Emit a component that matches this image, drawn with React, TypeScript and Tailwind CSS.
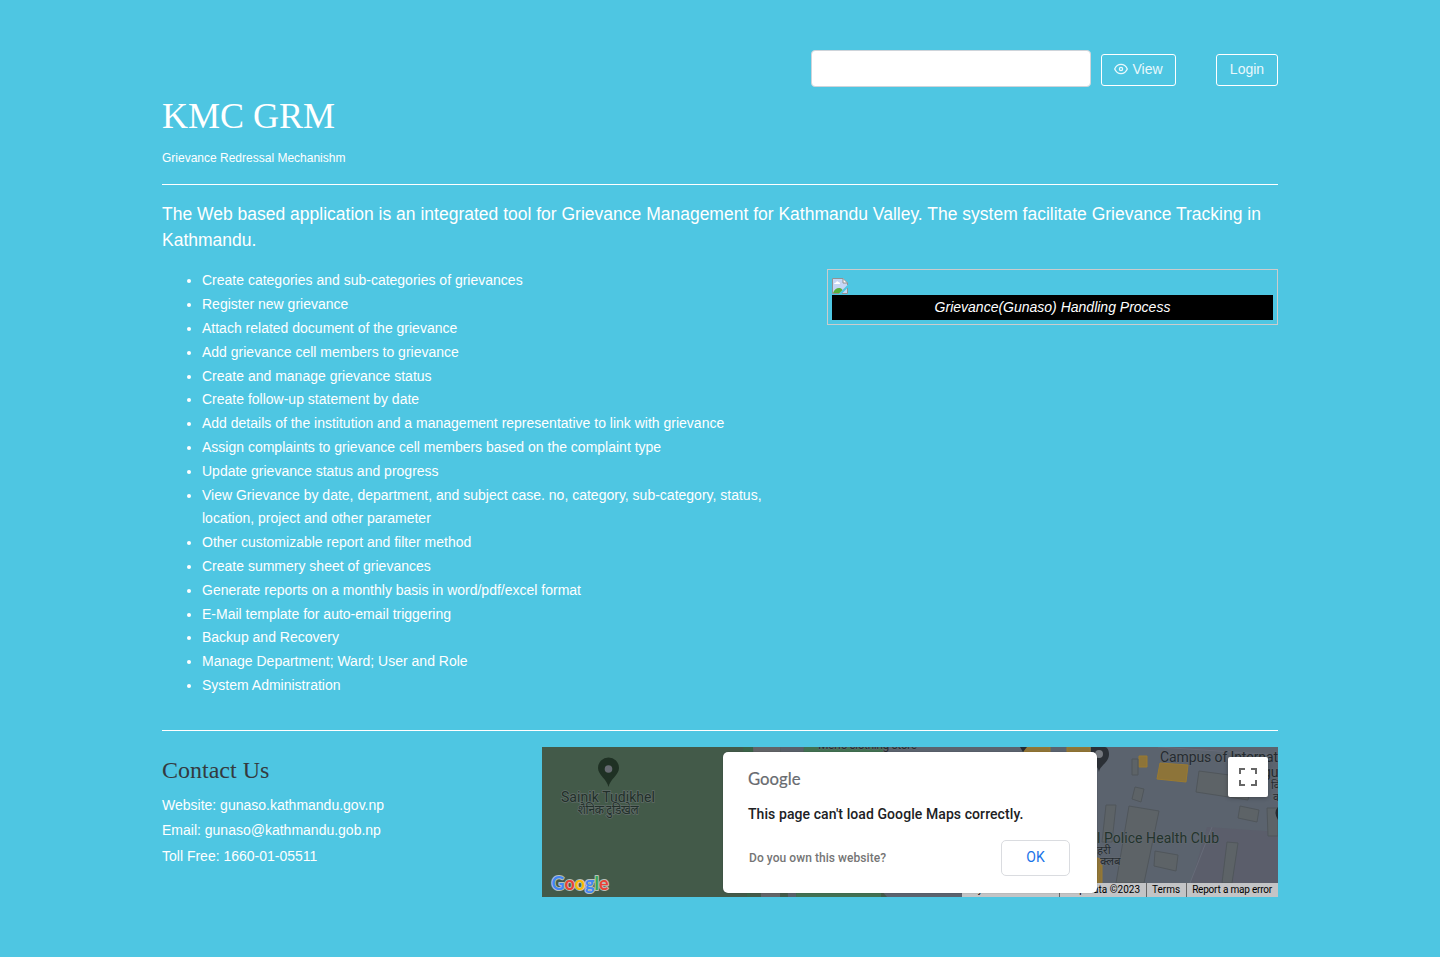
import React from "react";

const features = [
  "Create categories and sub-categories of grievances",
  "Register new grievance",
  "Attach related document of the grievance",
  "Add grievance cell members to grievance",
  "Create and manage grievance status",
  "Create follow-up statement by date",
  "Add details of the institution and a management representative to link with grievance",
  "Assign complaints to grievance cell members based on the complaint type",
  "Update grievance status and progress",
  "View Grievance by date, department, and subject case. no, category, sub-category, status, location, project and other parameter",
  "Other customizable report and filter method",
  "Create summery sheet of grievances",
  "Generate reports on a monthly basis in word/pdf/excel format",
  "E-Mail template for auto-email triggering",
  "Backup and Recovery",
  "Manage Department; Ward; User and Role",
  "System Administration",
];

function EyeIcon() {
  return (
    <svg className="mb-[2px]" width="14" height="14" viewBox="0 0 14 14" fill="none" stroke="currentColor" strokeWidth="1.3">
      <path d="M.7 7C2 4 4.300 2.400 7 2.400S12 4 13.300 7C12 10 9.700 11.600 7 11.600S2 10 .7 7Z" />
      <circle cx="7" cy="7" r="1.600" />
    </svg>
  );
}

function MissingImageIcon() {
  return (
    <svg className="block" width="16" height="16" viewBox="0 0 16 16">
      <path d="M.5.500H11L15.500 5V7L7 15.500H.5Z" fill="#c6d6f5" />
      <path d="M2 6Q2.300 4.500 4 4.500Q5 2.500 6.500 4Q8.500 4.500 8 6Z" fill="#fff" />
      <path d="M1 15Q3 10 7 10Q9 9.500 10.500 12L7 15.500H1Z" fill="#58b03a" />
      <path d="M15.500 10V15.500H10Z" fill="#c6d6f5" />
      <path d="M11 .5V5H15.500Z" fill="#fff" />
      <path d="M7 15.500H.5V.5H11L15.500 5V7M11 .5V5H15.500M15.500 10V15.500H10" fill="none" stroke="#929292" />
    </svg>
  );
}

function MapCanvas() {
  return (
    <svg className="block" width="736" height="150" viewBox="0 0 736 150" fontFamily="Roboto, 'Noto Sans', sans-serif">
      <rect width="736" height="150" fill="#5b636e" />
      <path d="M0 0H400V150H0Z" fill="#435a49" />
      <path d="M201 0H211L208 150H205Z" fill="#3b6348" />
      <path d="M211 0H238V150H219Z" fill="#626467" />
      <path d="M238 0H262L254 150H246Z" fill="#596069" />
      <path d="M262 0H345L339 150H254Z" fill="#427052" />
      <path d="M345 0H736V150H345L338 142V8Z" fill="#5b636e" />
      <path d="M665 80L736 85V150H645Z" fill="#5b5e6b" />
      <g fill="#8d7439" stroke="#9a7a31">
        <path d="M484 0H508V5H482ZM525 0H548V5H525ZM554 24V34H550M548 131V138H560V118H555" />
        <path d="M597 9H605V20H597ZM618 16L646 18L644 35L615 32ZM548 109L559 112L556 133H548Z" />
      </g>
      <g fill="#5d6367" stroke="#50565b">
        <path d="M590 12H596V28H590ZM593 40L602 42L599 55L590 52ZM564 58H574L570 95H560ZM587 59L617 64L602 136H574ZM657 24L710 31L706 53L654 45ZM698 59L717 63L715 75L696 71ZM613 104L636 108L634 124L612 119ZM685 95L696 96L690 136H680ZM725 61H736V89H726Z" />
      </g>
      <path d="M616 0L736 8M670 80L648 136" fill="none" stroke="#666b78" />
      <path d="M478 0H485L481 5Z" fill="#252b30" />
      <g fill="#1f3124">
        <path d="M66.500 40C65 32 56 28 56 21A10.500 10.500 0 0 1 77 21C77 28 68 32 66.500 40Z" />
        <path fill="#2b3036" d="M557 25C558 18 567 16 567 7C567 3 565 0 563 0H549V14C552 18 556 19 557 25Z" />
      </g>
      <circle cx="66.500" cy="22" r="3.800" fill="#666a71" />
      <circle cx="557" cy="7" r="4" fill="#74787e" />
      <g fill="#22302a" stroke="#606c68" strokeWidth="1.500" paintOrder="stroke" fontSize="14" textAnchor="middle">
        <text x="66" y="55" textLength="94">Sainik Tudikhel</text>
        <text x="66" y="67" fontSize="12" textLength="61">शैनिक टुडिखेल</text>
      </g>
      <g fill="#252b30" stroke="#656b72" strokeWidth="1" paintOrder="stroke" fontSize="14">
        <text x="276" y="2" fontSize="12" textLength="99">Men's clothing store</text>
        <text x="618" y="15" textLength="118">Campus of Internat</text>
        <text x="721" y="30">gu</text>
        <text x="729" y="42" fontSize="11">वि</text>
        <text x="731" y="54" fontSize="11">क</text>
        <text x="555" y="96" fill="#22332c" textLength="122">l Police Health Club</text>
        <text x="555" y="107" fontSize="11.500">हरी</text>
        <text x="558" y="118" fontSize="11.500">क्लब</text>
      </g>
      <path d="M736 60Q731 65 736 73Z" fill="#252b30" />
    </svg>
  );
}

function ColoredLogo() {
  return (
    <svg className="absolute bottom-0 left-[8px]" width="64" height="28" viewBox="0 0 64 28">
      <text x="1.500" y="20.500" fontFamily="Lato, sans-serif" fontSize="18" fontWeight="700" textLength="57" lengthAdjust="spacingAndGlyphs" stroke="#b9c0bb" strokeWidth="2" paintOrder="stroke" strokeLinejoin="round">
        <tspan fill="#4285f4">G</tspan><tspan fill="#ea4335">o</tspan><tspan fill="#fbbc05">o</tspan><tspan fill="#4285f4">g</tspan><tspan fill="#34a853">l</tspan><tspan fill="#ea4335">e</tspan>
      </text>
    </svg>
  );
}

function MapDialog() {
  return (
    <div className="absolute top-[5px] left-[181px] h-[141px] w-[374px] rounded-[5px] bg-white px-[25px] pt-[14px] shadow-[0_0_1px_rgba(0,0,0,0.5)]">
      <svg className="block" width="56" height="26" viewBox="0 0 56 26">
        <text x="0" y="18.500" fontFamily="Lato, sans-serif" fontSize="17.500" fill="#686b70" stroke="#686b70" strokeWidth=".2" textLength="52.500" lengthAdjust="spacingAndGlyphs">Google</text>
      </svg>
      <div className="mt-[12px] text-[14px] leading-[20px] font-medium tracking-[0.08px] whitespace-nowrap text-[#202124]">This page can't load Google Maps correctly.</div>
      <div className="mt-[16px] flex items-center justify-between pl-px">
        <span className="pt-[2px] text-[12px] font-medium tracking-[0.06px] text-[#757575]">Do you own this website?</span>
        <button className="mr-[2px] h-[36px] w-[69px] rounded-[5px] border border-[#dadce0] text-[14px] font-normal text-[#1a73e8]">OK</button>
      </div>
    </div>
  );
}

function GrievanceMap() {
  return (
    <div className="relative h-[150px] w-[736px] overflow-hidden font-[Roboto,sans-serif]">
      <MapCanvas />
      <ColoredLogo />
      <div className="absolute right-0 bottom-0 flex h-[14px] w-[316px] justify-end bg-[#c3c4c6] text-[10px] leading-[14px] text-black">
        <span className="pr-[6px] whitespace-nowrap">Keyboard shortcuts</span>
        <span className="border-l border-[#666] pr-[6px] pl-[5px] whitespace-nowrap">Map data ©2023</span>
        <span className="border-l border-[#666] pr-[6px] pl-[5px]">Terms</span>
        <span className="border-l border-[#666] pr-[6px] pl-[5px] tracking-[-0.2px] whitespace-nowrap">Report a map error</span>
      </div>
      <div className="absolute top-[10px] right-[10px] flex size-[40px] items-center justify-center rounded-[2px] bg-white shadow-[0_1px_4px_rgba(0,0,0,0.3)]">
        <svg width="18" height="18" viewBox="0 0 18 18" fill="none" stroke="#666" strokeWidth="2">
          <path d="M1 6V1H6M12 1H17V6M17 12V17H12M6 17H1V12" />
        </svg>
      </div>
      <MapDialog />
    </div>
  );
}

export default function App() {
  return (
    <div className="min-h-[957px] bg-[#4ec6e2] font-['Liberation_Sans',sans-serif] text-[14px] leading-[23.8px] text-white">
      <div className="mx-auto w-[1116px] pt-[50px]">
        <header className="h-[135px] border-b border-white">
          <div className="flex h-[37px] items-start justify-end">
            <input aria-label="Search" className="h-[37px] w-[280px] rounded-[4px] border border-[#ced4da] bg-white px-3 text-black" />
            <button className="mt-[4px] ml-[10px] flex h-[32px] w-[75px] items-center justify-center gap-[4px] rounded-[3px] border border-white pb-px text-[#e9f8fc]">
              <EyeIcon />
              View
            </button>
            <button className="mt-[4px] ml-[40px] h-[32px] w-[62px] rounded-[3px] border border-white pb-px text-[#e9f8fc]">Login</button>
          </div>
          <h1 className="mt-[7px] font-['Liberation_Serif',serif] text-[36px] leading-[44px]">KMC GRM</h1>
          <p className="mt-[10px] text-[12px] leading-[20px]">Grievance Redressal Mechanishm</p>
        </header>
        <p className="mt-[16px] text-[17.5px] leading-[26.25px]">
          The Web based application is an integrated tool for Grievance Management for Kathmandu Valley. The system facilitate Grievance Tracking in Kathmandu.
        </p>
        <div className="mt-[15.9px] flex h-[461.6px] items-start justify-between border-b border-white">
          <ul className="w-[625px] list-disc pl-[40px]">
            {features.map((item) => (
              <li key={item}>{item}</li>
            ))}
          </ul>
          <figure className="h-[56px] w-[451px] border border-[#ccc] px-[4px] pt-[8px]">
            <MissingImageIcon />
            <figcaption className="mt-px h-[25px] bg-black text-center leading-[25px] italic">Grievance(Gunaso) Handling Process</figcaption>
          </figure>
        </div>
        <footer className="mt-[16px] flex justify-between">
          <div>
            <h2 className="mt-[8px] font-['Liberation_Serif',serif] text-[24px] leading-[31px] text-[#343a40]">Contact Us</h2>
            <div className="mt-[6.8px] leading-[25.5px]">
              <p>Website: gunaso.kathmandu.gov.np</p>
              <p>Email: gunaso@kathmandu.gob.np</p>
              <p>Toll Free: 1660-01-05511</p>
            </div>
          </div>
          <GrievanceMap />
        </footer>
      </div>
    </div>
  );
}
